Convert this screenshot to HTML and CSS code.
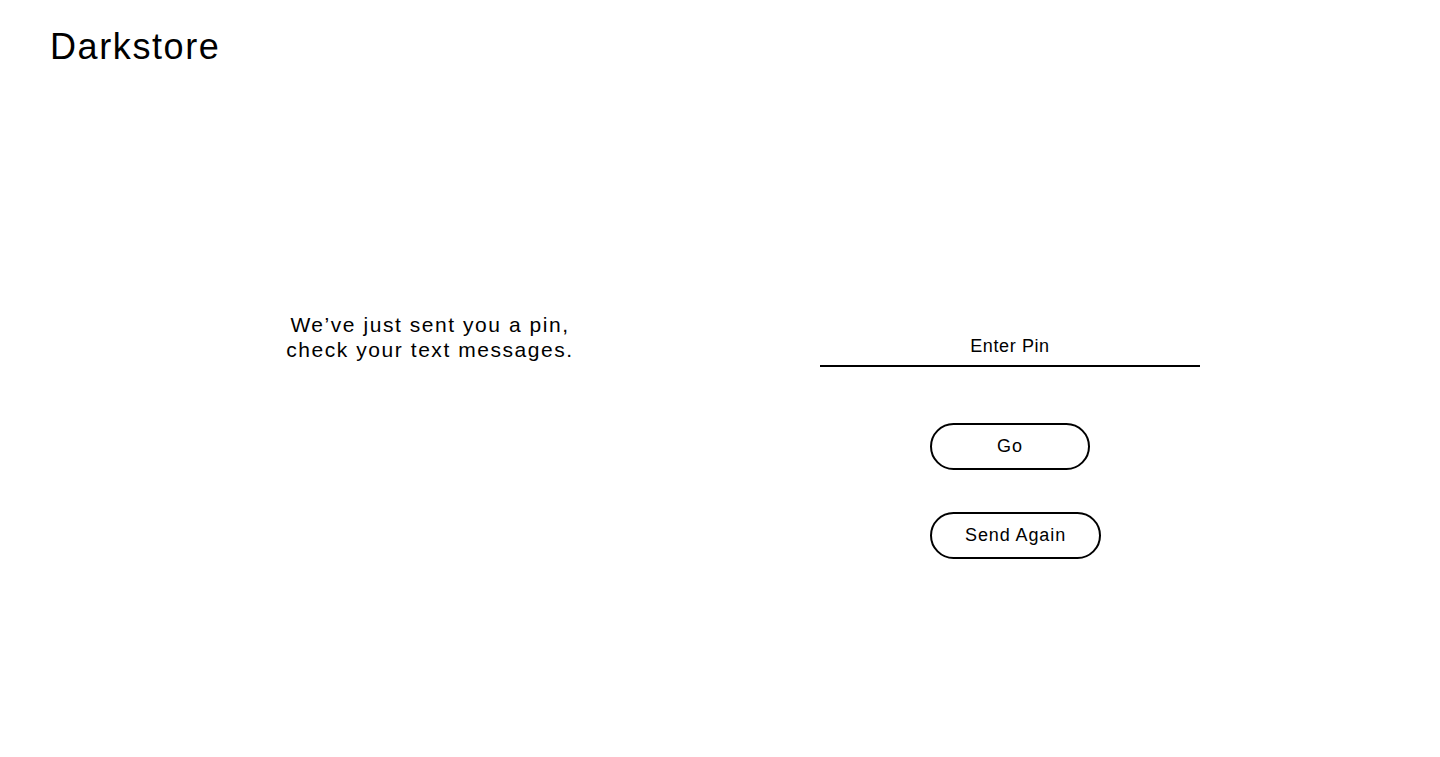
FILE: index.html
```html
<!DOCTYPE html>
<html lang="en">
<head>
<meta charset="utf-8">
<title>Darkstore</title>
<link rel="stylesheet" href="styles.css">
</head>
<body>
<header class="header">
  <h1 class="brand">Darkstore</h1>
</header>
<main class="main">
  <section class="col col-left">
    <p class="message">We’ve just sent you a pin,<br>check your text messages.</p>
  </section>
  <section class="col col-right">
    <form class="pin-form" onsubmit="return false">
      <input class="pin-input" type="text" placeholder="Enter Pin">
      <div class="actions">
        <button class="btn" type="submit">Go</button>
        <button class="btn" type="button">Send Again</button>
      </div>
    </form>
  </section>
</main>
</body>
</html>
```
FILE: styles.css
```css
* { box-sizing: border-box; }
html, body { margin: 0; padding: 0; background: #fff; }
body {
  font-family: "Liberation Sans", Arial, Helvetica, sans-serif;
  color: #000;
  width: 1440px;
  height: 757px;
  overflow: hidden;
}
.header {
  padding: 27px 50px 0;
}
.brand {
  margin: 0;
  font-size: 36px;
  font-weight: 400;
  line-height: 40px;
  letter-spacing: 1.6px;
}
.main {
  display: grid;
  grid-template-columns: 580px 580px;
  padding: 245px 140px 0;
}
.col {
  display: flex;
  flex-direction: column;
  align-items: center;
}
.message {
  margin: 0;
  text-align: center;
  font-size: 21px;
  line-height: 25px;
  letter-spacing: 1.55px;
}
.pin-form {
  display: flex;
  flex-direction: column;
  align-items: center;
  padding-top: 24px;
}
.pin-input {
  width: 380px;
  border: 0;
  border-bottom: 2px solid #000;
  padding: 0 0 8px;
  font-family: inherit;
  font-size: 18px;
  letter-spacing: 0.6px;
  text-align: center;
  outline: none;
  background: transparent;
}
.pin-input::placeholder { color: #000; opacity: 1; }
.actions {
  width: 160px;
  display: flex;
  flex-direction: column;
  align-items: flex-start;
  gap: 42px;
  margin-top: 56px;
}
.btn {
  min-width: 160px;
  height: 47px;
  padding: 0 33px;
  border: 2px solid #000;
  border-radius: 24px;
  background: #fff;
  font-family: inherit;
  font-size: 18px;
  letter-spacing: 0.9px;
  color: #000;
  white-space: nowrap;
  cursor: pointer;
}
```
